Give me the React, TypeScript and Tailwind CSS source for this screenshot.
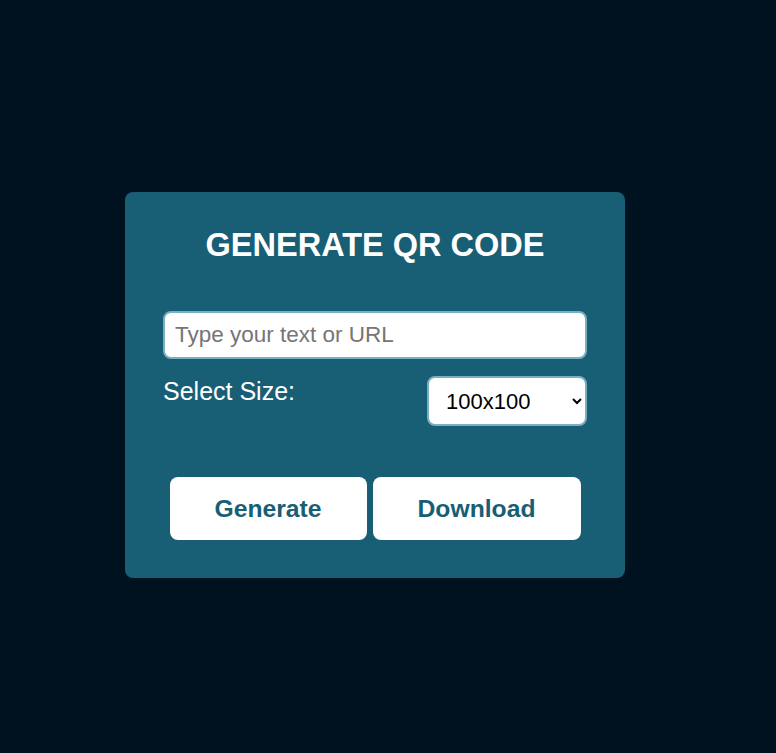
export default function App() {
  return (
    <div className="min-h-[753px] bg-[#00111f] pl-[125px] pt-[192px] font-['Liberation_Sans',Arial,sans-serif]">
      <div className="flex w-[500px] flex-col rounded-lg bg-[#185e74] px-[38px] pb-[38px] pt-[35px]">
        <h1 className="text-center text-[32.5px] font-bold leading-[37px] text-white">GENERATE QR CODE</h1>
        <input
          type="text"
          placeholder="Type your text or URL"
          className="mt-[47px] h-[48px] w-full rounded-lg border-2 border-[#7aafc0] bg-white px-[10px] text-[22.5px] text-black outline-none placeholder:text-[#757575]"
        />
        <div className="mt-[17px] flex items-start justify-between">
          <label className="pt-[1px] text-[25px] leading-[28px] text-white">Select Size:</label>
          <select
            defaultValue="100x100"
            className="h-[50px] w-[160px] rounded-lg border-2 border-[#7aafc0] bg-white pl-[13px] pr-[6px] text-[22px] text-black outline-none"
          >
            <option>100x100</option>
            <option>200x200</option>
            <option>300x300</option>
          </select>
        </div>
        <div className="mt-[51px] flex justify-center gap-[6px]">
          <button className="h-[63px] w-[197px] rounded-lg bg-white text-[24.7px] font-bold text-[#185e74]">Generate</button>
          <button className="h-[63px] w-[208px] rounded-lg bg-white text-[24.7px] font-bold text-[#185e74]">Download</button>
        </div>
      </div>
    </div>
  );
}
